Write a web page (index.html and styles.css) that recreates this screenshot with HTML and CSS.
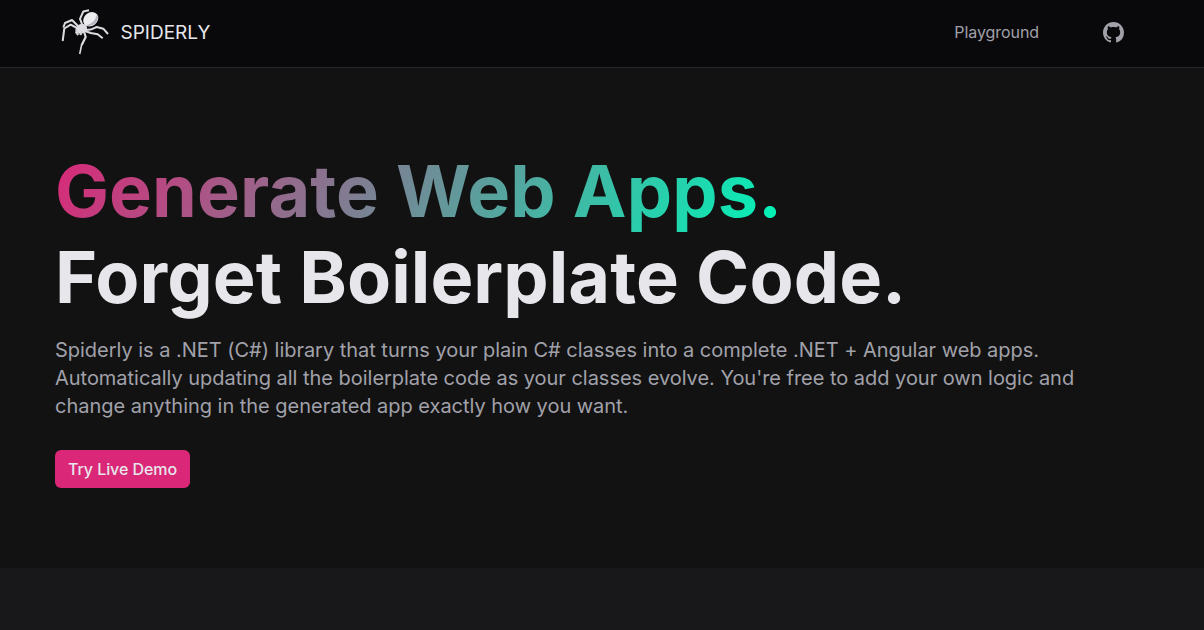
FILE: index.html
```html
<!DOCTYPE html>
<html lang="en">
<head>
<meta charset="utf-8">
<title>Spiderly</title>
<link rel="stylesheet" href="styles.css">
</head>
<body>
<header class="topbar">
  <a class="brand">
    <svg class="brand-logo" width="50" height="50" viewBox="0 0 50 50" fill="none">
      <g stroke="#dcdce0" stroke-width="2" stroke-linejoin="round">
        <path d="M22.700 19 L20 11.800 L23.300 4.500 L29 3.200"/>
        <path d="M18 19 L12 13 L5 16 L3.300 20.500"/>
        <path d="M17 21 L10.700 17.700 L4.300 21.500 L2.700 34"/>
        <path d="M25 23 L30.700 22.600 L36.700 20 L43.300 21.700 L48 27"/>
        <path d="M25 24 L30.700 26 L37.700 27.300 L42.700 31.300"/>
        <path d="M23.500 23 L25.700 30 L21.700 38" stroke-width="2.200"/>
        <path d="M21.700 37.500 L19.700 47" stroke-width="1.600"/>
      </g>
      <ellipse cx="30.700" cy="12.300" rx="8" ry="6.700" transform="rotate(-38 30.700 12.300)" fill="#ededf0"/>
      <path d="M37 7.500 Q39.300 12 35.500 16 Q31 20 25.800 18.600 Q34.500 16.500 37 7.500Z" fill="#b5b5be"/>
      <ellipse cx="21.300" cy="21.800" rx="6" ry="4.700" transform="rotate(-25 21.300 21.800)" fill="#dedee2"/>
      <path d="M17 22 L16.300 25.500 L18.300 28 M22 24 L20.300 28" stroke="#d4d4da" stroke-width="2.200"/>
    </svg>
    <span class="brand-name">SPIDERLY</span>
  </a>
  <nav class="links">
    <a class="link">Playground</a>
    <svg class="github" width="21" height="21" viewBox="0 0 16 16" fill="currentColor"><path d="M8 0C3.580 0 0 3.580 0 8c0 3.540 2.290 6.530 5.470 7.590.4.070.55-.17.55-.38 0-.19-.01-.82-.01-1.490-2.010.37-2.530-.49-2.690-.94-.09-.23-.48-.94-.82-1.130-.28-.15-.68-.52-.01-.53.63-.01 1.080.58 1.230.82.72 1.210 1.870.87 2.330.66.070-.52.28-.87.51-1.070-1.780-.2-3.640-.89-3.640-3.950 0-.87.31-1.590.82-2.150-.08-.2-.36-1.020.08-2.120 0 0 .67-.21 2.200.82.64-.18 1.320-.27 2-.27s1.360.09 2 .27c1.530-1.040 2.200-.82 2.200-.82.44 1.100.16 1.920.08 2.120.51.56.82 1.270.82 2.150 0 3.070-1.870 3.750-3.650 3.950.29.25.54.73.54 1.480 0 1.070-.01 1.930-.01 2.200 0 .21.15.46.55.38A8.010 8.010 0 0 0 16 8c0-4.420-3.580-8-8-8z"/></svg>
  </nav>
</header>
<main class="hero">
  <h1 class="headline"><span class="gradient">Generate Web Apps.</span><span class="plain">Forget Boilerplate Code.</span></h1>
  <p class="lead">Spiderly is a .NET (C#) library that turns your plain C# classes into a complete .NET + Angular web apps. Automatically updating all the boilerplate code as your classes evolve. You're free to add your own logic and change anything in the generated app exactly how you want.</p>
  <button class="cta">Try Live Demo</button>
</main>
</body>
</html>
```
FILE: styles.css
```css
* { box-sizing: border-box; }
body {
  margin: 0;
  min-height: 630px;
  background: #18181b;
  color: #e6e6eb;
  font-family: Inter, sans-serif;
  font-size: 16px;
}
.topbar {
  height: 68px;
  display: flex;
  justify-content: space-between;
  padding: 0 80px 0 60px;
  background: #09090b;
  border-bottom: 1px solid #27272a;
}
.brand { display: flex; gap: 10.500px; height: 64px; align-items: center; }
.brand-logo { display: block; }
.brand-name { padding-top: 2px; font-size: 19px; line-height: 24px; }
.links { display: flex; align-items: center; height: 65px; gap: 64px; color: #a1a1aa; }
.link { padding-bottom: 2px; line-height: 24px; letter-spacing: -0.070px; }
.github { display: block; }
.hero {
  height: 500px;
  padding: 80px 55px;
  background: #121212;
}
.headline { margin: 0; font-size: 72px; font-weight: 700; line-height: 86px; letter-spacing: 0.080px; }
.gradient {
  display: block;
  width: fit-content;
  background: linear-gradient(120deg, #db2777, #00f5b8);
  background-clip: text;
  -webkit-background-clip: text;
  color: transparent;
}
.plain { display: block; }
.lead {
  margin: 16px 0 30px;
  max-width: 1050px;
  font-size: 20px;
  line-height: 28px;
  letter-spacing: -0.028px;
  color: #a1a1aa;
}
.cta {
  display: block;
  height: 38px;
  padding: 0 13px;
  border: 0;
  border-radius: 6px;
  background: #db2777;
  color: #e6e6eb;
  font: 500 16px/24px Inter, sans-serif;
  letter-spacing: -0.070px;
}
```
